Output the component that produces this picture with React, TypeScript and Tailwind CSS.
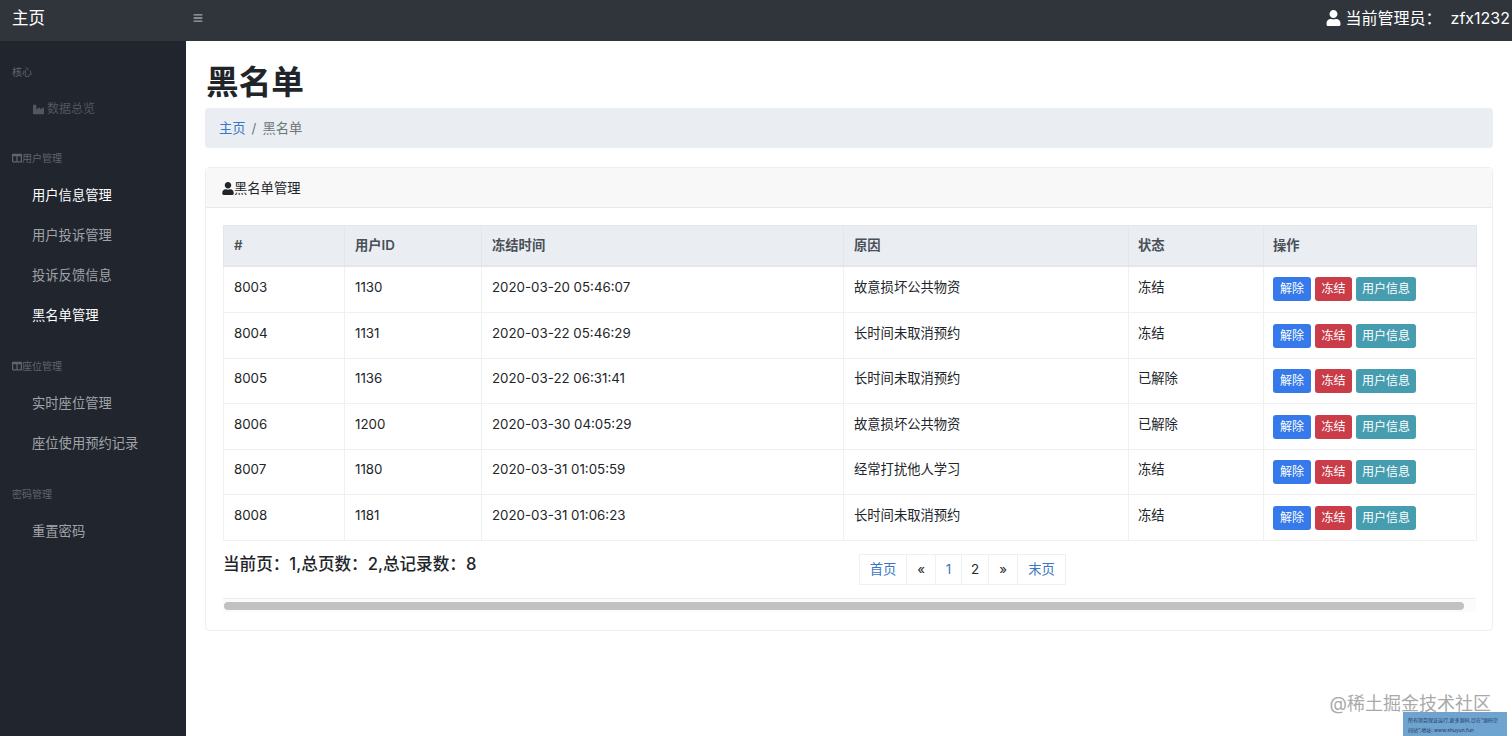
import React from 'react';
import { FaBars, FaColumns, FaIndustry, FaUser } from 'react-icons/fa';

const rows = [
  ['8003', '1130', '2020-03-20 05:46:07', '故意损坏公共物资', '冻结'],
  ['8004', '1131', '2020-03-22 05:46:29', '长时间未取消预约', '冻结'],
  ['8005', '1136', '2020-03-22 06:31:41', '长时间未取消预约', '已解除'],
  ['8006', '1200', '2020-03-30 04:05:29', '故意损坏公共物资', '已解除'],
  ['8007', '1180', '2020-03-31 01:05:59', '经常打扰他人学习', '冻结'],
  ['8008', '1181', '2020-03-31 01:06:23', '长时间未取消预约', '冻结'],
];

const rowHeights = ['h-[47px]', 'h-[46px]', 'h-[45px]', 'h-[46px]', 'h-[45px]', 'h-[46px]'];

const SideHeading = ({ children, icon, tall }: { children: React.ReactNode; icon?: boolean; tall?: boolean }) => (
  <div className={`flex items-center pl-3 text-[10px] leading-none text-[#61656b] ${tall ? 'h-[48px] pt-[14px]' : 'h-[47px] pt-[13px]'}`}>
    {icon && <FaColumns className="h-[10px] w-[10px]" />}
    {children}
  </div>
);

const SideLink = ({ children, active }: { children: React.ReactNode; active?: boolean }) => (
  <div className={`flex h-10 items-center pl-8 pt-[2px] text-[13.3px] ${active ? 'text-white' : 'text-[#a0a3a7]'}`}>
    {children}
  </div>
);

const PageBtn = ({ children, width, link }: { children: React.ReactNode; width: string; link?: boolean }) => (
  <div className={`flex h-[31px] items-center justify-center border border-[#eef0f2] -ml-px text-[13.3px] ${width} ${link ? 'text-[#3a76c4]' : 'text-[#222529]'}`}>
    {children}
  </div>
);

export default function App() {
  return (
    <div className="relative flex h-[736px] w-[1512px] flex-col overflow-hidden bg-white font-['Inter','Noto_Sans_CJK_SC',sans-serif] text-[#212529]">
      <header className="flex h-[41px] shrink-0 items-center bg-[#30353c] pb-[5px] text-white">
        <div className="w-[186px] pl-3 text-[16.5px]">主页</div>
        <FaBars className="ml-[7px] h-[10px] w-[10px] text-[#a2a5a9]" />
        <div className="ml-auto flex items-center pr-[2px] text-[16px]">
          <FaUser className="mr-[5px] h-[16px] w-[15px]" />
          <span>当前管理员：</span>
          <span className="ml-[9px]">zfx1232</span>
        </div>
      </header>

      <div className="flex min-h-0 flex-1">
        <aside className="w-[186px] shrink-0 bg-[#20252e]">
          <div className="flex h-[47px] items-center pl-3 pt-[15px] text-[10px] leading-none text-[#61656b]">核心</div>
          <div className="flex h-10 items-center pl-8 pt-[2px] text-[12px] text-[#53575d]">
            <FaIndustry className="mr-[2px] h-[11px] w-[13px]" />
            数据总览
          </div>
          <SideHeading icon>用户管理</SideHeading>
          <SideLink active>用户信息管理</SideLink>
          <SideLink>用户投诉管理</SideLink>
          <SideLink>投诉反馈信息</SideLink>
          <SideLink active>黑名单管理</SideLink>
          <SideHeading icon tall>座位管理</SideHeading>
          <SideLink>实时座位管理</SideLink>
          <SideLink>座位使用预约记录</SideLink>
          <SideHeading tall>密码管理</SideHeading>
          <SideLink>重置密码</SideLink>
        </aside>

        <main className="min-w-0 flex-1 pl-[19px] pr-[19px]">
          <h1 className="flex h-[67px] items-center pl-px pt-[16px] text-[32.7px] font-semibold leading-none">黑名单</h1>
          <div className="flex h-10 items-center rounded bg-[#eaeef2] pl-[14px] pt-[2px] text-[13.3px]">
            <span className="text-[#3a76c4]">主页</span>
            <span className="mx-[6px] text-[#6c757d]">/</span>
            <span className="text-[#6c757d]">黑名单</span>
          </div>

          <section className="mt-[19px] h-[464px] rounded border border-[#eceef0]">
            <div className="flex h-10 items-center border-b border-[#e8e9ea] bg-[#f8f8f8] pl-[16px] pt-[2px] text-[13.3px]">
              <FaUser className="h-[13px] w-[12px]" />
              黑名单管理
            </div>
            <div className="px-[17px] pt-[17px]">
              <table className="w-[1253px] table-fixed border-collapse text-left text-[13.3px]">
                <colgroup>
                  <col className="w-[121px]" />
                  <col className="w-[137px]" />
                  <col className="w-[362px]" />
                  <col className="w-[285px]" />
                  <col className="w-[135px]" />
                  <col className="w-[213px]" />
                </colgroup>
                <thead>
                  <tr className="h-[40px] bg-[#eaeef2] text-[#495057]">
                    {['#', '用户ID', '冻结时间', '原因', '状态', '操作'].map((h, j) => (
                      <th key={h} className={`border border-b-2 border-[#e3e6ea] pt-px font-semibold ${j > 3 ? 'pl-[9px] pr-[10px]' : 'px-[10px]'}`}>{h}</th>
                    ))}
                  </tr>
                </thead>
                <tbody>
                  {rows.map((row, i) => (
                    <tr key={row[0]} className={rowHeights[i]}>
                      {row.map((cell, j) => (
                        <td key={j} className={`border border-[#eff0f2] ${i === 0 ? 'pb-[2px]' : 'pb-[4px]'} ${j > 3 ? 'pl-[9px] pr-[10px]' : 'px-[10px]'}`}>{cell}</td>
                      ))}
                      <td className="border border-[#eff0f2] pl-[9px] pr-[10px]">
                        <div className="flex gap-1 text-[12px] text-white">
                          <span className="flex h-[24px] w-[38px] items-center justify-center rounded-[3px] bg-[#3579ea]">解除</span>
                          <span className="flex h-[24px] w-[37px] items-center justify-center rounded-[3px] bg-[#c93c48]">冻结</span>
                          <span className="flex h-[24px] w-[60px] items-center justify-center rounded-[3px] bg-[#479db0]">用户信息</span>
                        </div>
                      </td>
                    </tr>
                  ))}
                </tbody>
              </table>

              <div className="flex h-[57px] w-[1253px]">
                <div className="w-[637px] pt-[11px] text-[16.6px] font-medium">当前页：1,总页数：2,总记录数：8</div>
                <div className="flex pt-[13px]">
                  <PageBtn width="w-[48px]" link>首页</PageBtn>
                  <PageBtn width="w-[30px]">«</PageBtn>
                  <PageBtn width="w-[27px]" link>1</PageBtn>
                  <PageBtn width="w-[28px]">2</PageBtn>
                  <PageBtn width="w-[30px]">»</PageBtn>
                  <PageBtn width="w-[49px]" link>末页</PageBtn>
                </div>
              </div>

              <div className="flex h-[14px] w-[1253px] items-center border-t border-[#ececec] bg-[#fbfbfb] pl-px">
                <div className="h-2 w-[1240px] rounded-full bg-[#c1c1c1]" />
              </div>
            </div>
          </section>
        </main>
      </div>

      <div className="absolute right-[21px] top-[693px] text-[18px] leading-[22px] text-[#a9a9a9]">@稀土掘金技术社区</div>
      <div className="absolute left-[1403px] top-[712px] h-6 w-[104px] bg-[#6fa3d0] px-[5px] pt-[3px] text-[5px] leading-[10px] text-[#1d3a5c]">
        所有项目保证运行,更多源码,尽在“源码空间站”,地址: www.shuyun.fun
      </div>
    </div>
  );
}
